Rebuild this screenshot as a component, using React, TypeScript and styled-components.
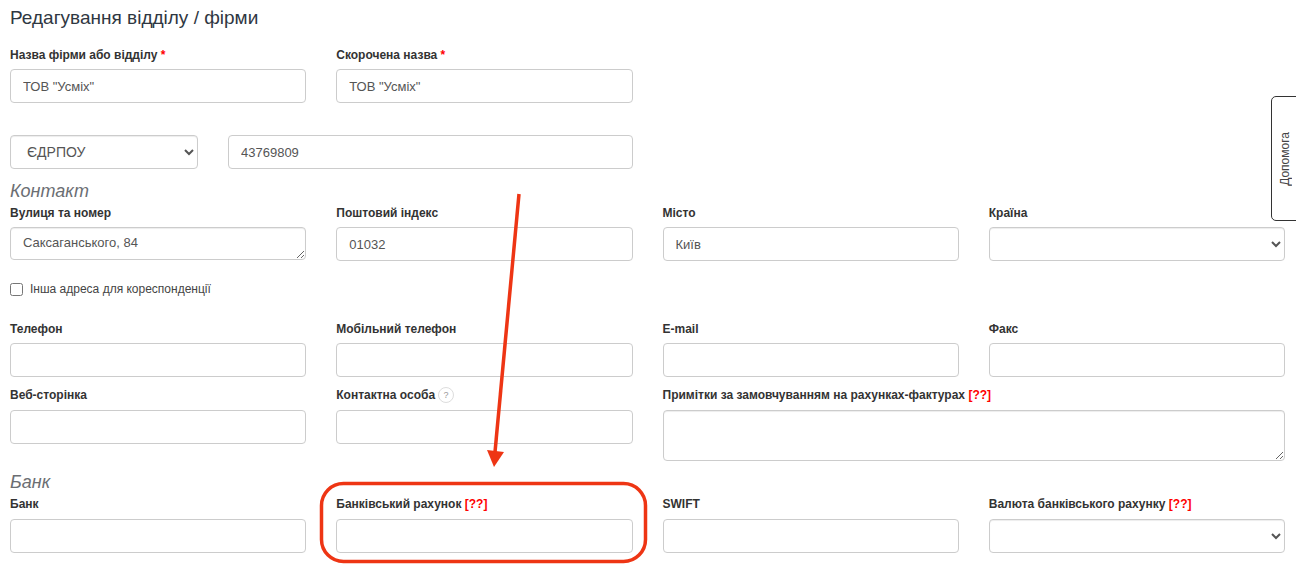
import React from 'react';
import styled, { createGlobalStyle } from 'styled-components';

const GlobalStyle = createGlobalStyle`
	html,
	body {
		margin: 0;
		height: 566px;
		overflow: hidden;
		background: #fff;
		font-family: 'Liberation Sans', Arial, sans-serif;
		color: #333;
	}
`;

type FieldProps = {
	label: string;
	required?: boolean;
	missing?: boolean;
	help?: boolean;
	tall?: boolean;
	wide?: boolean;
	children: React.ReactNode;
};

const Field: React.FC<FieldProps> = ({ label, required, missing, help, tall, wide, children }) => (
	<FieldBox $wide={wide}>
		<Label $tall={tall}>
			{label}
			{required && <Required> *</Required>}
			{missing && <Required> [??]</Required>}
			{help && <HelpBadge>?</HelpBadge>}
		</Label>
		{children}
	</FieldBox>
);

const App: React.FC = () => (
	<Page>
		<GlobalStyle />
		<Title>Редагування відділу / фірми</Title>

		<Row>
			<Field label="Назва фірми або відділу" required>
				<Input defaultValue={'ТОВ "Усміх"'} />
			</Field>
			<Field label="Скорочена назва" required>
				<Input defaultValue={'ТОВ "Усміх"'} />
			</Field>
		</Row>

		<TaxRow>
			<TaxSelect defaultValue="edrpou">
				<option value="edrpou">ЄДРПОУ</option>
			</TaxSelect>
			<Input defaultValue="43769809" />
		</TaxRow>

		<SectionTitle>Контакт</SectionTitle>
		<Row>
			<Field label="Вулиця та номер">
				<AddressArea defaultValue="Саксаганського, 84" />
			</Field>
			<Field label="Поштовий індекс">
				<Input defaultValue="01032" />
			</Field>
			<Field label="Місто">
				<Input defaultValue="Київ" />
			</Field>
			<Field label="Країна">
				<Select />
			</Field>
		</Row>

		<CheckRow>
			<Checkbox type="checkbox" />
			Інша адреса для кореспонденції
		</CheckRow>

		<Row>
			<Field label="Телефон">
				<Input />
			</Field>
			<Field label="Мобільний телефон">
				<Input />
			</Field>
			<Field label="E-mail">
				<Input />
			</Field>
			<Field label="Факс">
				<Input />
			</Field>
		</Row>

		<NextRow>
			<Field label="Веб-сторінка" tall>
				<Input />
			</Field>
			<Field label="Контактна особа" help tall>
				<Input />
			</Field>
			<Field label="Примітки за замовчуванням на рахунках-фактурах" missing tall wide>
				<NotesArea />
			</Field>
		</NextRow>

		<BankTitle>Банк</BankTitle>
		<Row>
			<Field label="Банк" tall>
				<Input />
			</Field>
			<Field label="Банківський рахунок" missing tall>
				<Input />
			</Field>
			<Field label="SWIFT" tall>
				<Input />
			</Field>
			<Field label="Валюта банківського рахунку" missing tall>
				<Select />
			</Field>
		</Row>

		<HelpTab>
			<HelpText>Допомога</HelpText>
		</HelpTab>

		<Markup viewBox="0 0 1296 566" aria-hidden="true">
			<line x1="519" y1="194" x2="495" y2="452" stroke="#ee3514" strokeWidth="3.5" />
			<polygon points="487,450 504,452 494,467" fill="#ee3514" />
			<rect x="321.5" y="483.5" width="324" height="78" rx="22" fill="none" stroke="#ee3514" strokeWidth="3.5" />
		</Markup>
	</Page>
);

const Page = styled.div`
	position: relative;
	box-sizing: border-box;
	width: 1296px;
	height: 566px;
	padding: 6px 11px 0 10px;
	overflow: hidden;
`;

const Title = styled.h1`
	margin: 0 0 17px;
	font-size: 19px;
	font-weight: 400;
	line-height: 24px;
	color: #2f3742;
`;

const Row = styled.div`
	display: grid;
	grid-template-columns: repeat(4, 1fr);
	column-gap: 30px;
`;

const NextRow = styled(Row)`
	margin-top: 10px;
	align-items: start;
`;

const TaxRow = styled.div`
	display: grid;
	grid-template-columns: 188px 405px;
	column-gap: 30px;
	margin-top: 32px;
`;

const FieldBox = styled.div<{ $wide?: boolean }>`
	min-width: 0;
	grid-column: ${(p) => (p.$wide ? 'span 2' : 'auto')};
`;

const Label = styled.label<{ $tall?: boolean }>`
	display: flex;
	align-items: ${(p) => (p.$tall ? 'center' : 'flex-end')};
	white-space: pre;
	height: 16px;
	margin-bottom: ${(p) => (p.$tall ? '7px' : '6px')};
	font-size: 12px;
	font-weight: 700;
	line-height: 15px;
	color: #333;
`;

const Required = styled.span`
	color: #f00;
`;

const HelpBadge = styled.span`
	box-sizing: border-box;
	width: 16px;
	height: 16px;
	margin-left: 3px;
	border: 1px solid #ddd;
	border-radius: 50%;
	font-size: 9px;
	font-weight: 400;
	line-height: 14px;
	text-align: center;
	color: #999;
`;

const controlStyles = `
	display: block;
	box-sizing: border-box;
	width: 100%;
	margin: 0;
	border: 1px solid #ccc;
	border-radius: 4px;
	background-color: #fff;
	font-family: 'Liberation Sans', Arial, sans-serif;
	font-size: 13px;
	color: #555;
	outline: none;
`;

const Input = styled.input`
	${controlStyles}
	height: 34px;
	padding: 6px 12px;
`;

const AddressArea = styled.textarea`
	${controlStyles}
	height: 33px;
	padding: 6px 12px;
	line-height: 18px;
	box-shadow: inset 0 1px 1px rgba(0, 0, 0, 0.075);
	resize: vertical;
`;

const NotesArea = styled(AddressArea)`
	height: 51px;
`;

const Select = styled.select`
	${controlStyles}
	height: 34px;
	padding: 6px 12px;
	box-shadow: inset 0 1px 1px rgba(0, 0, 0, 0.075);
`;

const TaxSelect = styled(Select)`
	font-size: 14px;
`;

const SectionTitle = styled.h3`
	margin: 10px 0 0;
	height: 26px;
	font-size: 18px;
	font-style: italic;
	font-weight: 400;
	line-height: 25px;
	color: #6b6e73;
`;

const BankTitle = styled(SectionTitle)`
	margin-top: 9px;
`;

const CheckRow = styled.label`
	display: flex;
	align-items: center;
	gap: 7px;
	height: 14px;
	margin: 21px 0 25px;
	font-size: 12px;
	line-height: 14px;
	color: #444;
`;

const Checkbox = styled.input`
	width: 13px;
	height: 13px;
	margin: 0;
`;

const HelpTab = styled.div`
	position: absolute;
	top: 96px;
	right: -6px;
	display: flex;
	align-items: center;
	justify-content: center;
	box-sizing: border-box;
	width: 31px;
	height: 125px;
	padding-right: 4px;
	border: 1px solid #333;
	border-radius: 5px;
	background: #fff;
`;

const HelpText = styled.span`
	writing-mode: vertical-rl;
	transform: rotate(180deg);
	font-size: 12px;
	line-height: 14px;
	color: #444;
`;

const Markup = styled.svg`
	position: absolute;
	top: 0;
	left: 0;
	width: 1296px;
	height: 566px;
	pointer-events: none;
`;

export default App;
